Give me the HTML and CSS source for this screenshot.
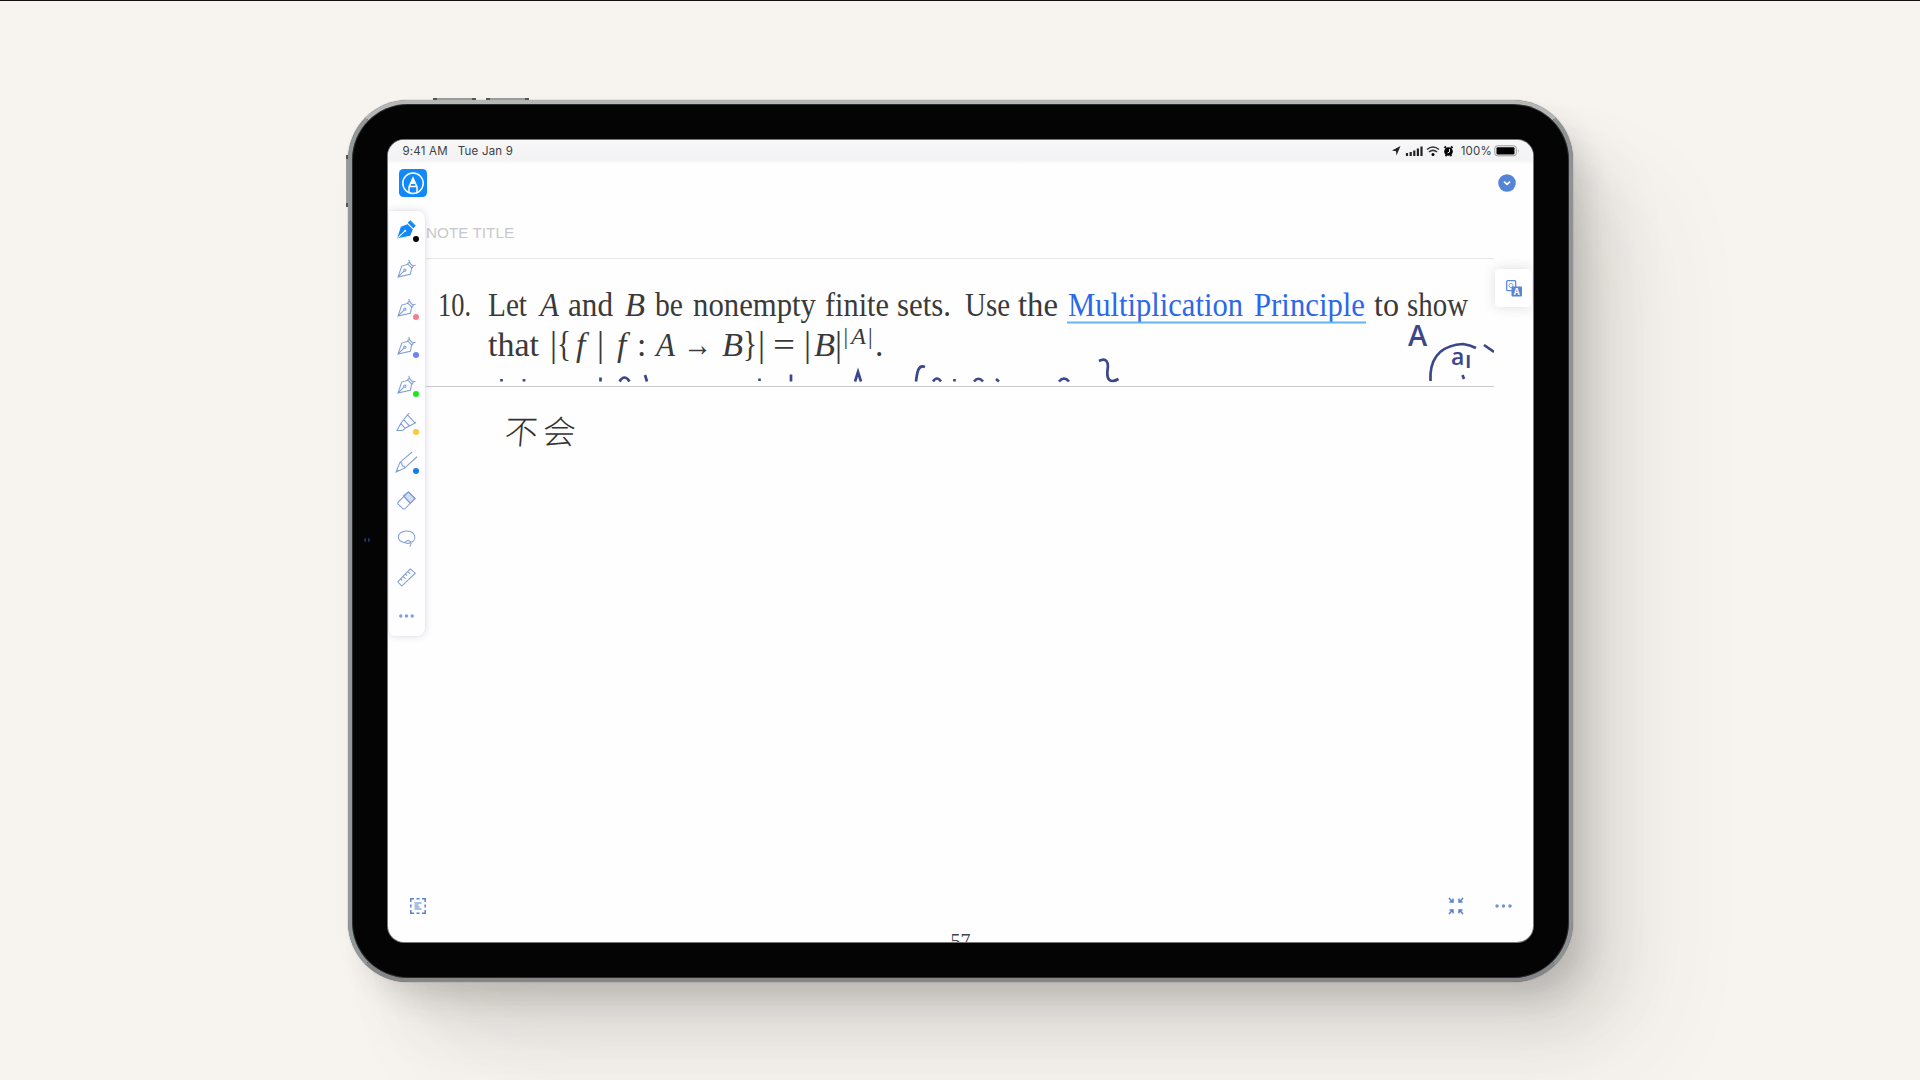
FILE: index.html
```html
<!DOCTYPE html>
<html lang="en">
<head>
<meta charset="utf-8">
<title>Note</title>
<link rel="stylesheet" href="styles.css">
</head>
<body>
<svg class="defs" width="0" height="0" aria-hidden="true">
  <symbol id="pen" viewBox="0 0 20 20"><path d="M1 19 5 7.500 11.500 5.500 15.500 9.500 14 16ZM1 19l6.500-6.500M11 5l2-1.500 4 4.500-1.500 2M13 3.500 12.500 1M17 7l2.500-.5"/><circle cx="8.300" cy="11.800" r="1.200"/></symbol>
</svg>
<main class="stage">
  <div class="tablet">
    <i class="key key-one"></i><i class="key key-two"></i><i class="key key-side"></i>
    <i class="sensor"></i>
    <div class="screen">
      <header class="status">
        <span class="clock">9:41 AM</span><span class="date">Tue Jan 9</span>
        <svg class="signals" width="66" height="14" viewBox="0 0 66 14">
          <path d="M9.500 2 1 6.500 5 7.200 5.500 11.500Z" fill="#222"/>
          <path d="M16 9v3M19.700 8v4M23.300 6.500V12M26.900 4.500V12M30.500 2.500V12" stroke="#222" stroke-width="2.200"/>
          <path d="M36 5.500q6-5 12 0M38 8q4-3.400 8 0" fill="none" stroke="#333" stroke-width="1.600"/><circle cx="42" cy="10.500" r="1.500"/>
          <circle cx="57.500" cy="7.500" r="4.300"/><path d="m53.500 4 1.500-1.500M61.500 4 60 2.500M54.500 12l1-1M60.500 12l-1-1" stroke="#111" stroke-width="2"/><path d="M58.500 5v3l-2 1" fill="none" stroke="#eee"/>
        </svg>
        <span class="percent">100%</span>
        <svg width="26" height="12" viewBox="0 0 26 12"><rect x=".8" y=".8" width="21.500" height="10" rx="2.500" fill="none" stroke="#999"/><rect x="2.500" y="2.200" width="18" height="7.400" rx="1"/><path d="M24 4q1.500 2 0 4" fill="#999"/></svg>
      </header>
      <div class="topbar">
        <svg width="28" height="28" viewBox="0 0 28 28"><rect width="28" height="28" rx="4.500" fill="#1189fb"/><g fill="none" stroke="#fff" stroke-width="1.500"><circle cx="14" cy="14.300" r="10.200"/><path d="M10 23.500V18L14 9l4 9v5.500M10.500 17.500h7"/></g><path d="M11.500 15 14 8.500l2.500 6.500Z" fill="#fff"/></svg>
        <svg width="18" height="18" viewBox="0 0 18 18"><circle cx="9" cy="9" r="8.800" fill="#5584d6"/><path d="m6 7.700 3 2.700 3-2.700" fill="none" stroke="#fff" stroke-width="1.700"/></svg>
      </div>
      <div class="note-title">NOTE TITLE</div>
      <svg class="question" width="1068" height="127" viewBox="426 259 1068 127">
        <g class="tex">
          <text x="438" y="316" textLength="33" lengthAdjust="spacingAndGlyphs">10.</text>
          <text x="488" y="316" textLength="39" lengthAdjust="spacingAndGlyphs">Let</text>
          <text class="var" x="540" y="316" textLength="19" lengthAdjust="spacingAndGlyphs">A</text>
          <text x="568" y="316" textLength="45" lengthAdjust="spacingAndGlyphs">and</text>
          <text class="var" x="625" y="316" textLength="20" lengthAdjust="spacingAndGlyphs">B</text>
          <text x="655" y="316" textLength="28" lengthAdjust="spacingAndGlyphs">be</text>
          <text x="693" y="316" textLength="123" lengthAdjust="spacingAndGlyphs">nonempty</text>
          <text x="825" y="316" textLength="64" lengthAdjust="spacingAndGlyphs">finite</text>
          <text x="897" y="316" textLength="54" lengthAdjust="spacingAndGlyphs">sets.</text>
          <text x="965" y="316" textLength="45" lengthAdjust="spacingAndGlyphs">Use</text>
          <text x="1018" y="316" textLength="40" lengthAdjust="spacingAndGlyphs">the</text>
          <text class="link" x="1068" y="316" textLength="175" lengthAdjust="spacingAndGlyphs">Multiplication</text>
          <text class="link" x="1254" y="316" textLength="111" lengthAdjust="spacingAndGlyphs">Principle</text>
          <text x="1374" y="316" textLength="25" lengthAdjust="spacingAndGlyphs">to</text>
          <text x="1407" y="316" textLength="61" lengthAdjust="spacingAndGlyphs">show</text>
          <text x="488" y="356" textLength="51" lengthAdjust="spacingAndGlyphs">that</text>
          <text class="bar" x="550" y="356">|</text>
          <text class="bar" x="557" y="356" textLength="14" lengthAdjust="spacingAndGlyphs">{</text>
          <text class="var" x="576" y="356">f</text>
          <text class="bar" x="597" y="356">|</text>
          <text class="var" x="617" y="356">f</text>
          <text x="637" y="356">:</text>
          <text class="var" x="656" y="356" textLength="19" lengthAdjust="spacingAndGlyphs">A</text>
          <text x="683" y="356" textLength="29" lengthAdjust="spacingAndGlyphs">→</text>
          <text class="var" x="722" y="356" textLength="21" lengthAdjust="spacingAndGlyphs">B</text>
          <text class="bar" x="743" y="356" textLength="14" lengthAdjust="spacingAndGlyphs">}</text>
          <text class="bar" x="758" y="356">|</text>
          <text x="773" y="356" textLength="22" lengthAdjust="spacingAndGlyphs">=</text>
          <text class="bar" x="804" y="356">|</text>
          <text class="var" x="814" y="356" textLength="21" lengthAdjust="spacingAndGlyphs">B</text>
          <text class="bar" x="835" y="356">|</text>
          <text class="sup" x="843.500" y="344">|</text>
          <text class="sup var" x="851" y="344" textLength="15" lengthAdjust="spacingAndGlyphs">A</text>
          <text class="sup" x="868" y="344">|</text>
          <text x="875" y="356">.</text>
        </g>
        <path d="M1067 322.500h299" stroke="#62b4f8" stroke-width="1.800"/>
        <g class="ink">
          <text x="1408" y="346" font-size="29">A</text>
          <text x="1451" y="365" font-size="23">a</text><text x="1465" y="368" font-size="23">ı</text>
          <path d="M1430.500 381V374C1432 354 1445 345 1463 344q7 1 13 4M1484 345l10 7M1462.500 375l1.500 4"/>
          <path d="M501.500 379v2.500M524 379v2.500M600.500 377.500v4M619.500 381.500q5-8 10 0M645 375l2 6.500M759.500 378.500v2.500M791 374.500v7M855 381.500l3-9.500 3 9.500"/>
          <path d="M916 381.500C917 373 918 364 925 367M933 381.500q4-6 8 0M954.500 379v2.500M974 381.500q4.500-5.500 9 0M996 379l3 2.500M1059 381.500q5-6 10 0M1099 361c7-4 10 1 8.500 9-1 9 2 14 11 9"/>
        </g>
      </svg>
      <section class="answer"><p class="handwritten">不会</p></section>
      <footer class="bottom">
        <svg width="16" height="16" viewBox="0 0 16 16" fill="none" stroke="#5a82c8"><path d="M.8 4V.8H4M12 .8h3.200V4M15.200 12v3.200H12M4 15.200H.8V12M6.500.8h3M6.500 15.200h3M.8 6.500v3M15.200 6.500v3" stroke-width="1.500"/><path d="M4.500 5h7M4.500 7h4M4.500 9h5M4.500 11h7" stroke-width="1.200"/></svg>
        <span class="actions">
        <svg width="16" height="18" viewBox="0 0 16 18" fill="none" stroke="#5a82c8" stroke-width="1.500"><path d="m1 1 3.500 4M1.500 5H5V1.500M15 1l-3.500 4M14.500 5H11V1.500M1 17l3.500-4M1.500 13H5v3.500M15 17l-3.500-4M14.500 13H11v3.500"/></svg>
        <svg width="17" height="6" viewBox="0 0 17 6" fill="#6c91d4"><circle cx="2" cy="3" r="1.700"/><circle cx="8.500" cy="3" r="1.700"/><circle cx="15" cy="3" r="1.700"/></svg>
        </span>
      </footer>
      <div class="page-number">57</div>

      <nav class="tools">
        <span class="tool active"><svg viewBox="0 0 20 20"><path d="M1 18.500 4.500 7.500 11 5l5 5-2.500 6ZM12 3l2-2 5 5-2 2Z"/><path d="m1 18.500 7.500-7" stroke="#fff"/><circle cx="8.700" cy="11.300" r="1" fill="#fff" stroke="none"/></svg><i class="dot black"></i></span>
        <span class="tool"><svg><use href="#pen"/></svg></span>
        <span class="tool"><svg><use href="#pen"/></svg><i class="dot pink"></i></span>
        <span class="tool"><svg><use href="#pen"/></svg><i class="dot violet"></i></span>
        <span class="tool"><svg><use href="#pen"/></svg><i class="dot green"></i></span>
        <span class="tool"><svg viewBox="0 0 20 20"><path d="M0 18.500 4 11l4.500 5-2.500 2.500ZM4 11 11 2l2-2M8.500 16 19 10.500l1-1M7 7l6 6.500M11 2l8 8.500"/></svg><i class="dot yellow"></i></span>
        <span class="tool"><svg viewBox="0 0 20 20"><path d="M16 0 3 11-1 21l9-4L21 5M3 11l2 .5.500 3 2 .5.500 2M0 19l2 1"/></svg><i class="dot blue"></i></span>
        <span class="tool"><svg viewBox="0 0 20 20"><path d="M7 5 12 1l7 7-5 5Z" fill="#d5def0"/><path d="M12 1 1 12q-.5 1 0 1.500l5.500 5.500H8L19 8ZM7 5.500l7 7.500"/></svg></span>
        <span class="tool"><svg viewBox="0 0 20 20"><path d="M9 14.500C-2 14-.5 2 10 2s11 10.500 4.500 12Q12 16 10 15t-.500-2q3-2 5 1 1 2-1 4.500"/></svg></span>
        <span class="tool"><svg viewBox="0 0 20 20"><path d="M14 1 .8 14.500 5 19 19.200 5.500ZM4 11.500l1.500 1.500M6.500 9l2.500 2.500M9 6.500l1.500 1.500M11.500 4 14 6"/></svg></span>
        <span class="tool"><svg viewBox="0 0 20 20" class="more"><circle cx="4" cy="9.500" r="1.200"/><circle cx="10" cy="9.500" r="1.200"/><circle cx="16" cy="9.500" r="1.200"/></svg></span>
      </nav>
      <div class="translate"><svg width="16" height="17" viewBox="0 0 16 17"><rect x=".7" y=".7" width="9" height="10" rx="1" fill="#fff" stroke="#5c89d6" stroke-width="1.300"/><circle cx="5" cy="5.500" r="2" fill="none" stroke="#7ca0df"/><rect x="5.500" y="6.500" width="10.500" height="10" rx="1" fill="#5685d4"/><text x="10.800" y="14.600" text-anchor="middle" fill="#fff" font-size="8.500" font-weight="700">A</text></svg></div>
    </div>
  </div>
</main>
</body>
</html>
```
FILE: styles.css
```css
* { box-sizing: border-box; }
body {
  margin: 0;
  height: 1080px;
  overflow: hidden;
  background: #f7f3ef;
  font-family: Inter, "Liberation Sans", sans-serif;
}
.defs { position: absolute; }
.stage {
  height: 1080px;
  padding: 99px 0 0 348px;
  border-top: 1px solid #111;
}
.tablet {
  position: relative;
  width: 1225px;
  height: 882px;
  padding: 36px 35px 36px 36px;
  border: 4px solid #8d9091;
  border-color: #b4b7b6 #8f9293 #858687 #929797;
  border-radius: 60px;
  background: #040404;
  box-shadow:
    inset 0 0 0 1px #2b2c2c,
    0 0 1px #555,
    14px 18px 28px -4px rgba(62, 60, 55, .17),
    42px 48px 60px -10px rgba(62, 60, 55, .13),
    80px 80px 110px -10px rgba(62, 60, 55, .08);
}
.key { position: absolute; background: #9a9c9b; border: 0 solid #555; }
.key-one, .key-two { top: -6px; width: 43px; height: 2px; border-width: 0 4px; }
.key-one { left: 81px; }
.key-two { left: 134px; }
.key-side { left: -6px; top: 51px; width: 2px; height: 52px; border-width: 4px 0; }
.sensor {
  position: absolute;
  left: 12px;
  top: 434px;
  width: 6px;
  height: 4px;
  border-radius: 2px;
  background: linear-gradient(90deg, #1b3475 40%, #050505 40% 60%, #1b3475 60%);
}
.screen {
  position: relative;
  display: flex;
  flex-direction: column;
  width: 1145px;
  height: 802px;
  overflow: hidden;
  border-radius: 16px;
  background: #fefefe;
  box-shadow: 0 0 0 1px #777;
}
.status {
  display: flex;
  align-items: center;
  height: 23px;
  padding: 0 13px 2px 14.500px;
  background: linear-gradient(#f7f7f8, #f3f3f5 85%, #fafafb);
  color: #404042;
  font-size: 11.500px;
  letter-spacing: .2px;
}
.date { margin-left: 10px; }
.signals { margin-left: auto; }
.percent { margin: 0 2px 0 4px; }
.topbar {
  display: flex;
  align-items: center;
  justify-content: space-between;
  height: 41px;
  padding: 0 17px 1px 11px;
}
.note-title {
  height: 55px;
  width: 1068px;
  margin-left: 38px;
  padding-top: 19px;
  border-bottom: 1px solid #e4e6e9;
  color: #c8c8cc;
  font: 15.300px/20px "Liberation Sans", sans-serif;
}
.question {
  box-sizing: content-box;
  flex: none;
  margin-left: 38px;
  border-bottom: 1px solid #c9c9cb;
}
.tex {
  fill: #3a3a3a;
  font-family: "Liberation Serif", serif;
  font-size: 33.500px;
}
.var { font-style: italic; }
.link { fill: #2b68ea; }
.bar { font-size: 35px; }
.sup { font-size: 23px; }
.ink { fill: none; stroke: #3b478b; stroke-width: 2.700px; }
.ink text {
  fill: #3b478b;
  stroke: none;
  font-family: "Open Sans", sans-serif;
  font-weight: 600;
}
.answer {
  flex: 1;
  padding: 18px 0 0 117px;
}
.handwritten {
  margin: 0;
  color: #333;
  font: 300 33px/50px "Noto Sans CJK SC", sans-serif;
  letter-spacing: 5px;
  transform: skewX(-5deg);
}
.bottom {
  display: flex;
  align-items: center;
  justify-content: space-between;
  height: 56px;
  padding: 0 21px 0 22px;
}
.actions { display: flex; align-items: center; gap: 31px; }
.page-number {
  height: 8px;
  color: #444;
  text-align: center;
  font: 20px/14px "Liberation Serif", serif;
}
.tools {
  position: absolute;
  left: 1px;
  top: 71px;
  display: flex;
  flex-direction: column;
  justify-content: space-around;
  width: 36px;
  height: 425px;
  border-radius: 2px 8px 8px 6px;
  background: #fefdff;
  box-shadow: 0 0 7px rgba(80, 60, 110, .22);
}
.tool {
  position: relative;
  height: 20px;
  padding-left: 8px;
}
.tool svg {
  display: block;
  width: 19px;
  height: 19px;
  overflow: visible;
  fill: none;
  stroke: #7f9ed4;
  stroke-width: 1.100px;
}
.active svg { fill: #1187f8; stroke: #1187f8; }
.tool .more { fill: #7f9ed4; }
.dot {
  position: absolute;
  left: 24px;
  top: 16px;
  width: 6px;
  height: 6px;
  border-radius: 50%;
}
.black { background: #050505; }
.pink { background: #f57f90; }
.violet { background: #6e84f0; }
.green { background: #18e718; }
.yellow { background: #f6cb38; }
.blue { background: #127cef; }
.translate {
  position: absolute;
  right: 1px;
  top: 129px;
  display: flex;
  align-items: center;
  justify-content: center;
  width: 37px;
  height: 38px;
  border-radius: 4px;
  background: #fff;
  box-shadow: 0 0 12px rgba(80, 60, 90, .18);
}
```
